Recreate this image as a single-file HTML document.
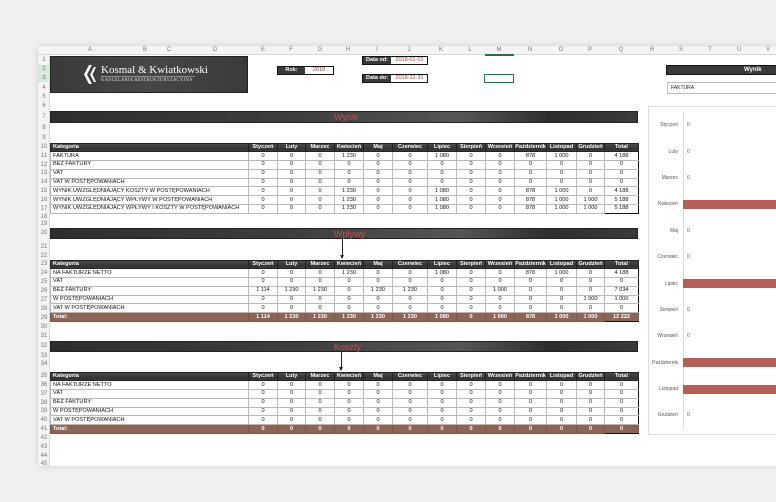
<!DOCTYPE html>
<html><head><meta charset="utf-8"><style>
*{margin:0;padding:0;box-sizing:border-box}
body{width:776px;height:502px;background:#efefef;position:relative;overflow:hidden;font-family:"Liberation Sans",Arial,sans-serif}
.sheet{position:absolute;left:38px;top:46px;width:750px;height:420px;background:#fff;box-shadow:0 0 6px rgba(0,0,0,.12)}
.colh{position:absolute;left:38px;top:46px;width:740px;height:9px;background:#f4f4f4;border-bottom:1px solid #d8d8d8}
.colh span{position:absolute;top:0;font-size:6px;color:#777;line-height:9px;transform:translateX(-50%)}
.rn{position:absolute;left:38px;width:12px;font-size:6px;color:#777;text-align:center;line-height:8px}
.rnbg{position:absolute;left:38px;top:55px;width:12px;height:411px;background:#f4f4f4;border-right:1px solid #d8d8d8}
.abs{position:absolute}
table{border-collapse:collapse;table-layout:fixed;position:absolute;left:50px;width:588px}
td{height:8.8px;font-size:5.6px;line-height:7px;text-align:center;border:1px solid #b8b8b8;color:#111;white-space:nowrap;overflow:hidden;padding:0}
td:first-child{text-align:left;padding-left:2px}
tr.h td{background:linear-gradient(#4a4a4a,#2e2e2e);color:#fff;font-weight:bold;border-color:#222}
tr.t td{background:#8c6557;color:#fff;font-weight:bold;border-color:#7a574a}
td.q{border-left:1.5px solid #111;border-right:1.5px solid #111}
tr:last-child td.q{border-bottom:1.5px solid #111}
.bar{position:absolute;left:50px;width:588px;background:linear-gradient(90deg,#2e2e2e 0%,#3d3d3d 40%,#555 70%,#2e2e2e 85%,#3a3a3a 100%);border:1px solid #222}
.bar span{position:absolute;left:283px;font-size:9px;color:#c0504d;top:0}
.mon{position:absolute;right:98px;font-size:5px;color:#555;text-align:right}
.z{position:absolute;left:687px;font-size:5px;color:#555}
.cb{position:absolute;left:683px;width:93px;height:9px;background:#b55f58}
</style></head><body>
<div class="sheet"></div>
<div class="colh">
<span style="left:52px">A</span><span style="left:107px">B</span><span style="left:131px">C</span><span style="left:177px">D</span><span style="left:225px">E</span><span style="left:253px">F</span><span style="left:282px">G</span><span style="left:310px">H</span><span style="left:339px">I</span><span style="left:371px">J</span><span style="left:403px">K</span><span style="left:432px">L</span><span style="left:461px">M</span><span style="left:492px">N</span><span style="left:523px">O</span><span style="left:552px">P</span><span style="left:583px">Q</span><span style="left:614px">R</span><span style="left:643px">S</span><span style="left:672px">T</span><span style="left:701px">U</span><span style="left:730px">V</span>
</div>
<div class="abs" style="left:485px;top:54px;width:29px;height:2px;background:#217346"></div>
<div class="rnbg"></div>
<div class="rn" style="top:56px">1</div><div class="rn" style="top:65px;background:#d3e9d9">2</div><div class="rn" style="top:74px;background:#d3e9d9">3</div><div class="rn" style="top:84px">4</div><div class="rn" style="top:93px">5</div><div class="rn" style="top:102px">6</div><div class="rn" style="top:113px">7</div><div class="rn" style="top:124px">8</div><div class="rn" style="top:134px">9</div><div class="rn" style="top:143px">10</div><div class="rn" style="top:152px">11</div><div class="rn" style="top:161px">12</div><div class="rn" style="top:169px">13</div><div class="rn" style="top:178px">14</div><div class="rn" style="top:187px">15</div><div class="rn" style="top:196px">16</div><div class="rn" style="top:205px">17</div><div class="rn" style="top:213px">18</div><div class="rn" style="top:220px">19</div><div class="rn" style="top:229px">20</div><div class="rn" style="top:243px">21</div><div class="rn" style="top:252px">22</div><div class="rn" style="top:260px">23</div><div class="rn" style="top:269px">24</div><div class="rn" style="top:278px">25</div><div class="rn" style="top:287px">26</div><div class="rn" style="top:296px">27</div><div class="rn" style="top:305px">28</div><div class="rn" style="top:314px">29</div><div class="rn" style="top:323px">30</div><div class="rn" style="top:332px">31</div><div class="rn" style="top:342px">32</div><div class="rn" style="top:352px">33</div><div class="rn" style="top:360px">34</div><div class="rn" style="top:372px">35</div><div class="rn" style="top:381px">36</div><div class="rn" style="top:390px">37</div><div class="rn" style="top:399px">38</div><div class="rn" style="top:407px">39</div><div class="rn" style="top:416px">40</div><div class="rn" style="top:425px">41</div><div class="rn" style="top:434px">42</div><div class="rn" style="top:443px">43</div><div class="rn" style="top:452px">44</div><div class="rn" style="top:460px">45</div>

<!-- logo -->
<div class="abs" style="left:50px;top:56px;width:198px;height:37px;background:linear-gradient(90deg,#3a3a3a,#474747 50%,#3a3a3a);border:1px solid #222"></div>
<svg class="abs" style="left:83px;top:65px" width="14" height="19" viewBox="0 0 14 19"><path d="M6 0 L1 9.5 L6 19 L9 19 L4 9.5 L9 0Z M11 2 L7 9.5 L11 17 L13 17 L9.5 9.5 L13 2Z" fill="#fff"/></svg>
<div class="abs" style="left:101px;top:64px;font-family:'Liberation Serif',serif;font-size:11px;color:#fff;white-space:nowrap">Kosmal &amp; Kwiatkowski</div>
<div class="abs" style="left:101px;top:76px;width:94px;height:1px;background:#888"></div>
<div class="abs" style="left:101px;top:78px;font-family:'Liberation Serif',serif;font-size:4.8px;color:#ddd;white-space:nowrap;letter-spacing:.1px">KANCELARIA RESTRUKTURYZACYJNA</div>

<!-- Rok / dates -->
<div class="abs" style="left:277px;top:66px;width:57px;height:9px;border:1px solid #111;background:#fff"></div>
<div class="abs" style="left:278px;top:67px;width:27px;height:7px;background:#3a3a3a;color:#fff;font-size:5.5px;font-weight:bold;text-align:center;line-height:7px">Rok:</div>
<div class="abs" style="left:305px;top:67px;width:28px;font-size:5.5px;color:#a0403a;text-align:center;line-height:7px">2018</div>
<div class="abs" style="left:362px;top:56px;width:66px;height:9px;border:1px solid #111;background:#fff"></div>
<div class="abs" style="left:363px;top:57px;width:28px;height:7px;background:#3a3a3a;color:#fff;font-size:5.5px;font-weight:bold;text-align:center;line-height:7px">Data od:</div>
<div class="abs" style="left:392px;top:57px;width:35px;font-size:5.5px;color:#a0403a;text-align:center;line-height:7px">2018-01-01</div>
<div class="abs" style="left:362px;top:74px;width:66px;height:9px;border:1px solid #111;background:#fff"></div>
<div class="abs" style="left:363px;top:75px;width:28px;height:7px;background:#3a3a3a;color:#fff;font-size:5.5px;font-weight:bold;text-align:center;line-height:7px">Data do:</div>
<div class="abs" style="left:392px;top:75px;width:35px;font-size:5.5px;color:#a0403a;text-align:center;line-height:7px">2018-12-31</div>
<div class="abs" style="left:484px;top:74px;width:30px;height:9px;border:1.5px solid #217346"></div>

<!-- right panel -->
<div class="abs" style="left:666px;top:65px;width:112px;height:10px;background:#3a3a3a;border:1px solid #111;color:#fff;font-size:6px;font-weight:bold;line-height:8px;padding-left:77px">Wynik</div>
<div class="abs" style="left:667px;top:82px;width:112px;height:12px;border:1px solid #bbb;background:#fff;font-size:5px;line-height:11px;padding-left:3px;color:#222">FAKTURA</div>
<div class="abs" style="left:648px;top:106px;width:140px;height:329px;border:1px solid #ddd;background:#fff"></div>
<div class="abs" style="left:683px;top:112px;width:1px;height:318px;background:#ddd"></div>
<div class="mon" style="top:122px">Styczeń</div><div class="z" style="top:122px">0</div>
<div class="mon" style="top:149px">Luty</div><div class="z" style="top:149px">0</div>
<div class="mon" style="top:175px">Marzec</div><div class="z" style="top:175px">0</div>
<div class="mon" style="top:201px">Kwiecień</div><div class="cb" style="top:200px"></div>
<div class="mon" style="top:228px">Maj</div><div class="z" style="top:228px">0</div>
<div class="mon" style="top:254px">Czerwiec</div><div class="z" style="top:254px">0</div>
<div class="mon" style="top:281px">Lipiec</div><div class="cb" style="top:279px"></div>
<div class="mon" style="top:307px">Sierpień</div><div class="z" style="top:307px">0</div>
<div class="mon" style="top:333px">Wrzesień</div><div class="z" style="top:333px">0</div>
<div class="mon" style="top:360px">Październik</div><div class="cb" style="top:358px"></div>
<div class="mon" style="top:386px">Listopad</div><div class="cb" style="top:385px"></div>
<div class="mon" style="top:412px">Grudzień</div><div class="z" style="top:412px">0</div>

<!-- bars -->
<div class="bar" style="top:111px;height:12px"><span>Wynik</span></div>
<div class="bar" style="top:228px;height:11px"><span>Wpływy</span></div>
<div class="bar" style="top:341px;height:11px"><span>Koszty</span></div>
<div class="abs" style="left:342px;top:239px;width:1px;height:19px;background:#222"></div>
<div class="abs" style="left:340px;top:255px;border-left:2px solid transparent;border-right:2px solid transparent;border-top:4px solid #222"></div>
<div class="abs" style="left:341px;top:352px;width:1px;height:18px;background:#222"></div>
<div class="abs" style="left:339px;top:367px;border-left:2px solid transparent;border-right:2px solid transparent;border-top:4px solid #222"></div>

<table style="top:142.5px">
<colgroup><col style="width:198px"><col style="width:29px"><col style="width:28px"><col style="width:29px"><col style="width:29px"><col style="width:29px"><col style="width:35px"><col style="width:29px"><col style="width:29px"><col style="width:29px"><col style="width:32px"><col style="width:30px"><col style="width:28px"><col style="width:34px"></colgroup>
<tr class="h"><td>Kategoria</td><td>Styczeń</td><td>Luty</td><td>Marzec</td><td>Kwiecień</td><td>Maj</td><td>Czerwiec</td><td>Lipiec</td><td>Sierpień</td><td>Wrzesień</td><td>Październik</td><td>Listopad</td><td>Grudzień</td><td class="q">Total</td></tr>
<tr><td>FAKTURA</td><td>0</td><td>0</td><td>0</td><td>1 230</td><td>0</td><td>0</td><td>1 080</td><td>0</td><td>0</td><td>878</td><td>1 000</td><td>0</td><td class="q">4 188</td></tr>
<tr><td>BEZ FAKTURY</td><td>0</td><td>0</td><td>0</td><td>0</td><td>0</td><td>0</td><td>0</td><td>0</td><td>0</td><td>0</td><td>0</td><td>0</td><td class="q">0</td></tr>
<tr><td>VAT</td><td>0</td><td>0</td><td>0</td><td>0</td><td>0</td><td>0</td><td>0</td><td>0</td><td>0</td><td>0</td><td>0</td><td>0</td><td class="q">0</td></tr>
<tr><td>VAT W POSTĘPOWANIACH</td><td>0</td><td>0</td><td>0</td><td>0</td><td>0</td><td>0</td><td>0</td><td>0</td><td>0</td><td>0</td><td>0</td><td>0</td><td class="q">0</td></tr>
<tr><td>WYNIK UWZGLĘDNIAJĄCY KOSZTY W POSTĘPOWANIACH</td><td>0</td><td>0</td><td>0</td><td>1 230</td><td>0</td><td>0</td><td>1 080</td><td>0</td><td>0</td><td>878</td><td>1 000</td><td>0</td><td class="q">4 188</td></tr>
<tr><td>WYNIK UWZGLĘDNIAJĄCY WPŁYWY W POSTĘPOWANIACH</td><td>0</td><td>0</td><td>0</td><td>1 230</td><td>0</td><td>0</td><td>1 080</td><td>0</td><td>0</td><td>878</td><td>1 000</td><td>1 000</td><td class="q">5 188</td></tr>
<tr><td>WYNIK UWZGLĘDNIAJĄCY WPŁYWY I KOSZTY W POSTĘPOWANIACH</td><td>0</td><td>0</td><td>0</td><td>1 230</td><td>0</td><td>0</td><td>1 080</td><td>0</td><td>0</td><td>878</td><td>1 000</td><td>1 000</td><td class="q">5 188</td></tr>
</table>

<table style="top:259.5px">
<colgroup><col style="width:198px"><col style="width:29px"><col style="width:28px"><col style="width:29px"><col style="width:29px"><col style="width:29px"><col style="width:35px"><col style="width:29px"><col style="width:29px"><col style="width:29px"><col style="width:32px"><col style="width:30px"><col style="width:28px"><col style="width:34px"></colgroup>
<tr class="h"><td>Kategoria</td><td>Styczeń</td><td>Luty</td><td>Marzec</td><td>Kwiecień</td><td>Maj</td><td>Czerwiec</td><td>Lipiec</td><td>Sierpień</td><td>Wrzesień</td><td>Październik</td><td>Listopad</td><td>Grudzień</td><td class="q">Total</td></tr>
<tr><td>NA FAKTURZE NETTO</td><td>0</td><td>0</td><td>0</td><td>1 230</td><td>0</td><td>0</td><td>1 080</td><td>0</td><td>0</td><td>878</td><td>1 000</td><td>0</td><td class="q">4 188</td></tr>
<tr><td>VAT</td><td>0</td><td>0</td><td>0</td><td>0</td><td>0</td><td>0</td><td>0</td><td>0</td><td>0</td><td>0</td><td>0</td><td>0</td><td class="q">0</td></tr>
<tr><td>BEZ FAKTURY</td><td>1 114</td><td>1 230</td><td>1 230</td><td>0</td><td>1 230</td><td>1 230</td><td>0</td><td>0</td><td>1 000</td><td>0</td><td>0</td><td>0</td><td class="q">7 034</td></tr>
<tr><td>W POSTĘPOWANIACH</td><td>0</td><td>0</td><td>0</td><td>0</td><td>0</td><td>0</td><td>0</td><td>0</td><td>0</td><td>0</td><td>0</td><td>1 000</td><td class="q">1 000</td></tr>
<tr><td>VAT W POSTĘPOWANIACH</td><td>0</td><td>0</td><td>0</td><td>0</td><td>0</td><td>0</td><td>0</td><td>0</td><td>0</td><td>0</td><td>0</td><td>0</td><td class="q">0</td></tr>
<tr class="t"><td>Total:</td><td>1 114</td><td>1 230</td><td>1 230</td><td>1 230</td><td>1 230</td><td>1 230</td><td>1 080</td><td>0</td><td>1 000</td><td>878</td><td>1 000</td><td>1 000</td><td class="q">12 222</td></tr>
</table>

<table style="top:371.5px">
<colgroup><col style="width:198px"><col style="width:29px"><col style="width:28px"><col style="width:29px"><col style="width:29px"><col style="width:29px"><col style="width:35px"><col style="width:29px"><col style="width:29px"><col style="width:29px"><col style="width:32px"><col style="width:30px"><col style="width:28px"><col style="width:34px"></colgroup>
<tr class="h"><td>Kategoria</td><td>Styczeń</td><td>Luty</td><td>Marzec</td><td>Kwiecień</td><td>Maj</td><td>Czerwiec</td><td>Lipiec</td><td>Sierpień</td><td>Wrzesień</td><td>Październik</td><td>Listopad</td><td>Grudzień</td><td class="q">Total</td></tr>
<tr><td>NA FAKTURZE NETTO</td><td>0</td><td>0</td><td>0</td><td>0</td><td>0</td><td>0</td><td>0</td><td>0</td><td>0</td><td>0</td><td>0</td><td>0</td><td class="q">0</td></tr>
<tr><td>VAT</td><td>0</td><td>0</td><td>0</td><td>0</td><td>0</td><td>0</td><td>0</td><td>0</td><td>0</td><td>0</td><td>0</td><td>0</td><td class="q">0</td></tr>
<tr><td>BEZ FAKTURY</td><td>0</td><td>0</td><td>0</td><td>0</td><td>0</td><td>0</td><td>0</td><td>0</td><td>0</td><td>0</td><td>0</td><td>0</td><td class="q">0</td></tr>
<tr><td>W POSTĘPOWANIACH</td><td>0</td><td>0</td><td>0</td><td>0</td><td>0</td><td>0</td><td>0</td><td>0</td><td>0</td><td>0</td><td>0</td><td>0</td><td class="q">0</td></tr>
<tr><td>VAT W POSTĘPOWANIACH</td><td>0</td><td>0</td><td>0</td><td>0</td><td>0</td><td>0</td><td>0</td><td>0</td><td>0</td><td>0</td><td>0</td><td>0</td><td class="q">0</td></tr>
<tr class="t"><td>Total:</td><td>0</td><td>0</td><td>0</td><td>0</td><td>0</td><td>0</td><td>0</td><td>0</td><td>0</td><td>0</td><td>0</td><td>0</td><td class="q">0</td></tr>
</table>
</body></html>
